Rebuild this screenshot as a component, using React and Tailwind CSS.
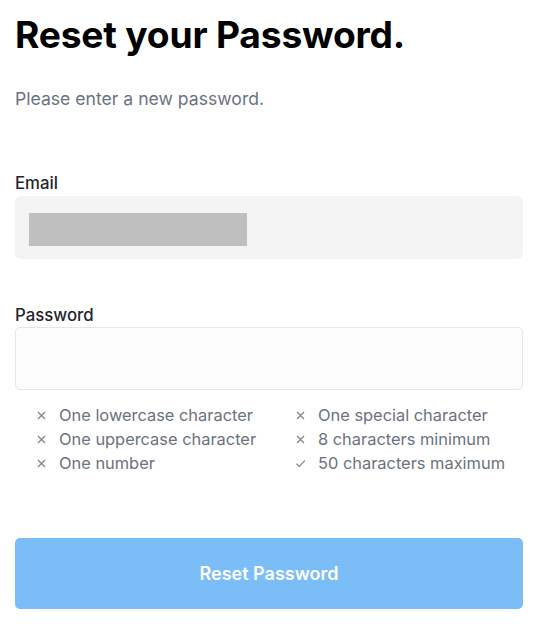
import { useState } from "react";

const rules = [
  { label: "One lowercase character", ok: false },
  { label: "One special character", ok: false },
  { label: "One uppercase character", ok: false },
  { label: "8 characters minimum", ok: false },
  { label: "One number", ok: false },
  { label: "50 characters maximum", ok: true },
];

function Mark({ ok }) {
  if (ok) {
    return (
      <svg width="11" height="11" viewBox="0 0 11 11" fill="none" stroke="#7c828c" strokeWidth="1.2">
        <path d="M1.5 5.8 L4.2 8.4 L9.8 2.6" />
      </svg>
    );
  }
  return (
    <svg width="11" height="11" viewBox="0 0 11 11" fill="none" stroke="#7c828c" strokeWidth="1.2">
      <path d="M2 2 L9 9 M9 2 L2 9" />
    </svg>
  );
}

export default function App() {
  const [password, setPassword] = useState("");

  return (
    <div className="min-h-screen bg-white pl-[15px] pr-[19px] pt-[12px] font-['Inter',sans-serif]">
      <h1 className="text-[37.2px] leading-[46px] font-bold text-black tracking-[-0.2px]">Reset your Password.</h1>
      <p className="mt-[29px] text-[17.6px] leading-[24px] text-[#6b7280]">Please enter a new password.</p>

      {/* ── Email ── */}
      <label className="block mt-[62px] text-[16.8px] leading-[20px] font-medium text-[#22262b]">Email</label>
      <div className="mt-[3px] h-[63px] rounded-[6px] bg-[#f4f4f4] flex items-start pt-[17px] pl-[14px]">
        <div className="w-[218px] h-[33px] bg-[#bfbfbf]" />
      </div>

      {/* ── Password ── */}
      <label className="block mt-[46px] text-[16.8px] leading-[20px] font-medium text-[#22262b]">Password</label>
      <input
        type="password"
        value={password}
        onChange={(e) => setPassword(e.target.value)}
        className="mt-[2px] block w-full h-[63px] rounded-[5px] border border-[#e6e6e6] bg-[#fcfcfc] px-[14px] outline-none"
      />

      <ul className="mt-[13px] grid grid-cols-[259px_1fr] pl-[21px]">
        {rules.map((r) => (
          <li key={r.label} className="flex items-center gap-[12px] h-[24px] text-[16.4px] text-[#6b7280]">
            <Mark ok={r.ok} />
            <span>{r.label}</span>
          </li>
        ))}
      </ul>

      <button
        type="button"
        className="mt-[63px] w-full h-[71px] rounded-[5px] bg-[#7bbdf7] text-white text-[18px] font-semibold"
      >
        Reset Password
      </button>
    </div>
  );
}
